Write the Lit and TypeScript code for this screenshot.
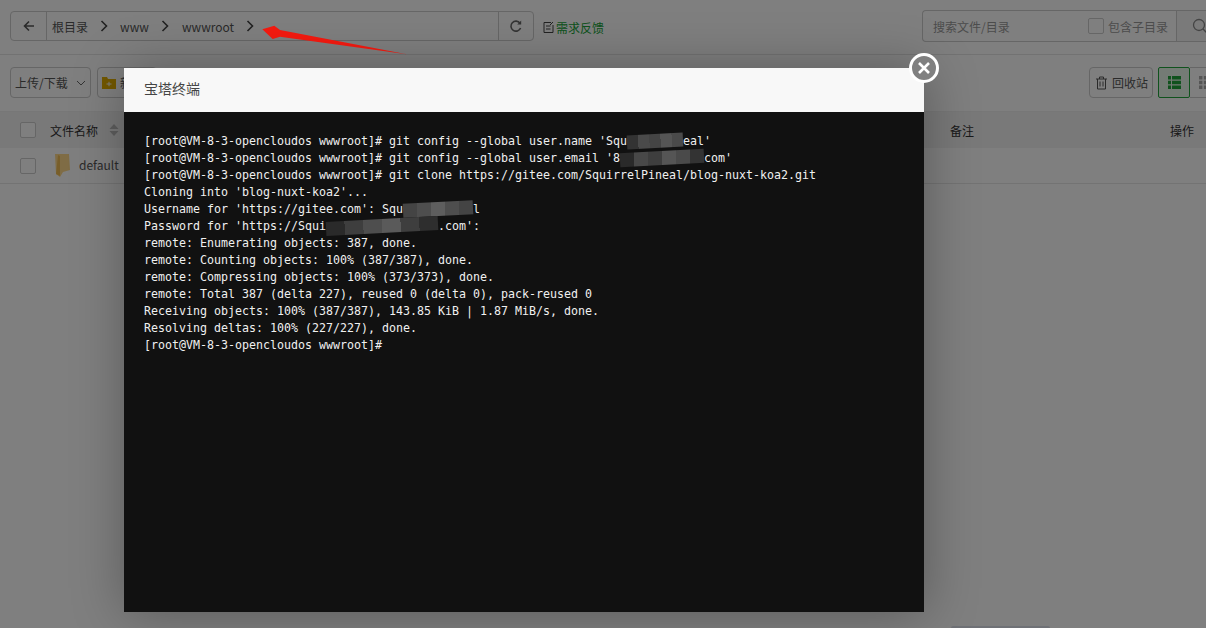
import { LitElement, html, css } from "lit";
import { customElement } from "lit/decorators.js";

const mosaic = (w: number, cols: string[]) => {
  const n = cols.length;
  const stops = cols.map((c, i) => `${c} ${(i / n) * 100}% ${((i + 1) / n) * 100}%`).join(",");
  return html`<span class="mosaic" style="width:${w}px;background:linear-gradient(90deg,${stops})"></span>`;
};

@customElement("app-root")
export class AppRoot extends LitElement {
  static styles = css`
    :host { display: block; width: 1206px; height: 628px; position: relative; overflow: hidden; background: #fff; font-family: "Noto Sans CJK SC", "Liberation Sans", sans-serif; color: #666; font-size: 12px; }
    .page { display: flex; flex-direction: column; padding: 10px 0 0 10px; height: 628px; box-sizing: border-box; }
    .top { display: flex; align-items: flex-start; height: 32px; }
    .crumbbar { display: flex; width: 524px; height: 30px; margin-top: 1px; border: 1px solid #ccc; border-radius: 4px; box-sizing: border-box; }
    .back { width: 35px; display: flex; align-items: center; justify-content: center; border-right: 1px solid #ccc; }
    .crumbs { flex: 1; display: flex; align-items: center; gap: 12px; padding-left: 5px; font-size: 12px; color: #555; }
    .crumbs .last { margin-left: 1px; }
    .refresh { width: 35px; box-sizing: border-box; display: flex; align-items: center; justify-content: center; border-left: 1px solid #ccc; }
    .feedback { display: flex; align-items: center; margin: 9px 0 0 9px; gap: 2px; color: #20a53a; }
    .search { margin-left: auto; width: 284px; height: 32px; box-sizing: border-box; border: 1px solid #ccc; border-right: 0; border-radius: 4px 0 0 4px; display: flex; align-items: center; padding-left: 10px; color: #999; }
    .search .ph { flex: 1; }
    .cb { width: 16px; height: 16px; box-sizing: border-box; border: 1px solid #ccc; border-radius: 2px; background: #fff; flex: none; }
    .search .sub { margin-left: 4px; width: 68px; flex: none; }
    .search .go { width: 30px; flex: none; box-sizing: border-box; align-self: stretch; border-left: 1px solid #ccc; background: #f5f5f5; display: flex; align-items: center; padding-left: 15px; }
    .search .go svg { flex: none; }
    .rule { height: 1px; background: #e5e5e5; margin: 12px 0 12px -10px; }
    .tools { display: flex; align-items: center; height: 31px; gap: 6px; }
    .btn { height: 31px; box-sizing: border-box; border: 1px solid #ccc; border-radius: 4px; display: flex; align-items: center; color: #555; background: #fff; }
    .upload { width: 81px; padding-left: 4px; gap: 8px; }
    .create { width: 60px; padding-left: 4px; gap: 4px; }
    .right { margin-left: auto; display: flex; align-items: center; gap: 5px; }
    .recycle { width: 64px; padding-left: 5px; gap: 4px; }
    .views { display: flex; width: 48px; overflow: hidden; }
    .list { width: 32px; height: 31px; flex: none; box-sizing: border-box; border: 1px solid #20a53a; border-radius: 2px; background: #e8f6ea; display: flex; align-items: center; justify-content: center; }
    .grid { width: 32px; height: 31px; flex: none; box-sizing: border-box; border: 1px solid #ccc; border-left: 0; display: flex; align-items: center; justify-content: center; }
    .thead { margin-top: 13px; height: 37px; margin-left: -10px; padding-left: 20px; background: #f2f2f2; border-top: 1px solid #eee; display: flex; align-items: center; box-sizing: border-box; color: #333; }
    .tname { margin-left: 14px; width: 59px; }
    .sort { width: 10px; }
    .note { margin-left: 831px; }
    .op { margin-left: 196px; }
    .row { height: 36px; margin-left: -10px; padding-left: 20px; border-bottom: 1px solid #e6e6e6; display: flex; align-items: center; box-sizing: border-box; color: #555; }
    .row svg { margin-left: 19px; margin-right: 9px; }
    .row .fname { margin-top: -2px; }
    .bottom { position: absolute; left: 951px; bottom: 0; width: 99px; height: 2px; background: #dfe2ec; border-radius: 2px 2px 0 0; }

    .shade { position: absolute; inset: 0; background: rgba(0, 0, 0, 0.5); }
    .arrow { position: absolute; left: 255px; top: 20px; }
    .modal { position: absolute; left: 124px; top: 68px; width: 800px; height: 544px; display: flex; flex-direction: column; box-shadow: 1px 1px 50px rgba(0, 0, 0, 0.3); }
    .mhead { height: 44px; flex: none; box-sizing: border-box; background: #f8f8f8; color: #444; font-size: 14px; line-height: 40px; padding-left: 20px; }
    .term { flex: 1; background: #111; color: #f0f0f0; padding: 21px 20px 0; font-family: "DejaVu Sans Mono", "Liberation Mono", monospace; font-size: 11.63px; line-height: 17px; white-space: pre; }
    .term div { height: 17px; }
    .mosaic { display: inline-block; height: 14px; vertical-align: -3px; transform: rotate(-3deg); }
    .close { position: absolute; left: 785px; top: -15px; width: 30px; height: 30px; box-sizing: border-box; border-radius: 50%; border: 3px solid #fff; background: #808080; display: flex; align-items: center; justify-content: center; }
  `;

  render() {
    const chev = html`<svg width="8" height="12" viewBox="0 0 8 12"><path d="M1.5 1l5 5-5 5" fill="none" stroke="#444" stroke-width="1.6"/></svg>`;
    return html`
      <div class="page">
        <div class="top">
          <div class="crumbbar">
            <div class="back"><svg width="12" height="12" viewBox="0 0 12 12"><path d="M11 6H2M6 1.5L1.5 6 6 10.5" fill="none" stroke="#555" stroke-width="1.6"/></svg></div>
            <div class="crumbs"><span>根目录</span>${chev}<span>www</span>${chev}<span class="last">wwwroot</span>${chev}</div>
            <div class="refresh"><svg width="14" height="14" viewBox="0 0 14 14"><path d="M11.6 9A5 5 0 1 1 11 4.2" fill="none" stroke="#666" stroke-width="1.6"/><path d="M12.2 1.6v4h-4z" fill="#666"/></svg></div>
          </div>
          <div class="feedback"><svg width="11" height="13" viewBox="0 0 11 13"><path d="M8 1.5H1v10h9V4M3 5h4.5M3 8h4.5M7 4l3-3" fill="none" stroke="#444"/></svg><span>需求反馈</span></div>
          <div class="search"><span class="ph">搜索文件/目录</span><span class="cb"></span><span class="sub">包含子目录</span>
            <span class="go"><svg width="16" height="16" viewBox="0 0 16 16"><circle cx="7" cy="7" r="5.5" fill="none" stroke="#888" stroke-width="1.3"/><path d="M11 11l3.5 3.5" stroke="#888" stroke-width="1.3"/></svg></span></div>
        </div>
        <div class="rule"></div>
        <div class="tools">
          <div class="btn upload"><span>上传/下载</span><svg width="10" height="6" viewBox="0 0 10 6"><path d="M1 1l4 4 4-4" fill="none" stroke="#666"/></svg></div>
          <div class="btn create"><svg width="14" height="12" viewBox="0 0 14 12"><path d="M0 0h5l1 2h8v10H0z" fill="#e5b100"/><path d="M4.5 7h5M7 4.8v4.4" stroke="#fff"/></svg><span>新建</span></div>
          <div class="right">
            <div class="btn recycle"><svg width="13" height="14" viewBox="0 0 13 14"><path d="M1 3h11M4.5 3V1h4v2M2.5 3v10h8V3M5 5.5v5M8 5.5v5" fill="none" stroke="#555"/></svg><span>回收站</span></div>
            <div class="views">
              <div class="list"><svg width="13" height="13" viewBox="0 0 13 13"><path d="M0 0h3v3.4H0zM4 0h9v3.4H4zM0 4.8h3v3.4H0zM4 4.8h9v3.4H4zM0 9.6h3V13H0zM4 9.6h9V13H4z" fill="#20a53a"/></svg></div>
              <div class="grid"><svg width="13" height="13" viewBox="0 0 13 13"><path d="M0 0h3.4v3.4H0zM4.8 0h3.4v3.4H4.8zM9.6 0H13v3.4H9.6zM0 4.8h3.4v3.4H0zM4.8 4.8h3.4v3.4H4.8zM9.6 4.8H13v3.4H9.6zM0 9.6h3.4V13H0zM4.8 9.6h3.4V13H4.8zM9.6 9.6H13V13H9.6z" fill="#aaa"/></svg></div>
            </div>
          </div>
        </div>
        <div class="thead"><span class="cb"></span><span class="tname">文件名称</span>
          <svg class="sort" width="9" height="12" viewBox="0 0 9 12"><path d="M4.5 0L9 5H0zM4.5 12L0 7h9z" fill="#bbb"/></svg>
          <span class="note">备注</span><span class="op">操作</span></div>
        <div class="row"><span class="cb"></span>
          <svg width="15" height="23" viewBox="0 0 15 23"><path d="M0 0h14l1 16-7 2-3 5-4-3z" fill="#ffd98a"/><path d="M3 1l2 1v20l-4-2z" fill="#f0bd55"/></svg><span class="fname">default</span></div>
      </div>
      <div class="bottom"></div>
      <div class="shade"></div>
      <svg class="arrow" width="160" height="40" viewBox="0 0 160 40"><path d="M7.3 9.3L19.3 5.7 25 10 151.7 34.3 25 16.7 17.7 19z" fill="#f51a10"/></svg>
      <div class="modal">
        <div class="mhead">宝塔终端</div>
        <div class="term"><div>[root@VM-8-3-opencloudos wwwroot]# git config --global user.name 'Squ${mosaic(56, ["#333", "#4a4a4a", "#444", "#555", "#4a4a4a"])}eal'</div><div>[root@VM-8-3-opencloudos wwwroot]# git config --global user.email '8${mosaic(84, ["#2a2a2a", "#484848", "#3e3e3e", "#555", "#4a4a4a", "#333"])}com'</div><div>[root@VM-8-3-opencloudos wwwroot]# git clone https://gitee.com/SquirrelPineal/blog-nuxt-koa2.git</div><div>Cloning into 'blog-nuxt-koa2'...</div><div>Username for 'https://gitee.com': Squ${mosaic(70, ["#444", "#4e4e4e", "#5e5e5e", "#4e4e4e", "#444"])}l</div><div>Password for 'https://Squi${mosaic(112, ["#2a2a2a", "#3e3e3e", "#4e4e4e", "#5a5a5a", "#3e3e3e", "#2e2e2e"])}.com':</div><div>remote: Enumerating objects: 387, done.</div><div>remote: Counting objects: 100% (387/387), done.</div><div>remote: Compressing objects: 100% (373/373), done.</div><div>remote: Total 387 (delta 227), reused 0 (delta 0), pack-reused 0</div><div>Receiving objects: 100% (387/387), 143.85 KiB | 1.87 MiB/s, done.</div><div>Resolving deltas: 100% (227/227), done.</div><div>[root@VM-8-3-opencloudos wwwroot]#</div></div>
        <div class="close"><svg width="14" height="14" viewBox="0 0 14 14"><path d="M2 2l10 10M12 2L2 12" stroke="#fff" stroke-width="2.6"/></svg></div>
      </div>
    `;
  }
}
